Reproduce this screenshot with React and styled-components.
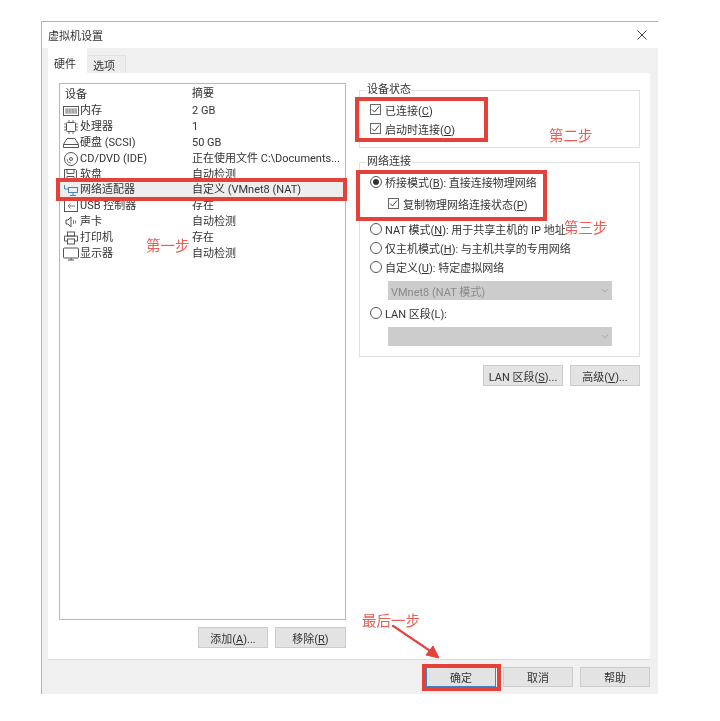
import React from 'react';
import styled, { createGlobalStyle } from 'styled-components';

const FONT = 'Roboto, "Noto Sans CJK SC", sans-serif';
const RED = '#e5413b';

const GlobalStyle = createGlobalStyle`
  html, body {
    margin: 0;
    background: #fff;
  }
  #root {
    height: 721px;
  }
`;

const Page = styled.div`
  position: relative;
  width: 720px;
  height: 721px;
  padding: 21px 0 0 41px;
  box-sizing: border-box;
  overflow: hidden;
  font-family: ${FONT};
  font-size: 11px;
  color: #333;
  filter: blur(0.35px);
`;

const Window = styled.div`
  width: 617px;
  height: 673px;
  box-sizing: border-box;
  border-top: 1px solid #9db8d0;
  border-left: 1px solid #9db8d0;
  display: flex;
  flex-direction: column;
  background: #f0f0f0;
`;

const TitleBar = styled.div`
  height: 26px;
  flex: none;
  display: flex;
  align-items: center;
  justify-content: space-between;
  padding: 0 11px 0 6px;
  background: #fff;
`;

const Tabs = styled.div`
  display: flex;
  align-items: flex-end;
  height: 25px;
  flex: none;
  padding-left: 6px;
`;

const Tab = styled.div`
  display: flex;
  align-items: center;
  justify-content: ${(p) => (p.$active ? 'flex-start' : 'center')};
  box-sizing: border-box;
  background: ${(p) => (p.$active ? '#fff' : '#ededed')};
  width: 39px;
  height: ${(p) => (p.$active ? '25px' : '18px')};
  padding: ${(p) => (p.$active ? '4px 0 0 6px' : '0 4px 0 0')};
  border-right: ${(p) => (p.$active ? 'none' : '1px solid #e2e2e2')};
  border-top: ${(p) => (p.$active ? 'none' : '1px solid #e2e2e2')};
`;

const Panel = styled.div`
  margin-left: 6px;
  width: 602px;
  height: 587px;
  flex: none;
  box-sizing: border-box;
  background: #fff;
  border-bottom: 1px solid #dcdcdc;
  padding: 10px 10px 0 11px;
  display: grid;
  grid-template-columns: 287px 281px;
  column-gap: 13px;
`;

const LeftColumn = styled.div`
  display: flex;
  flex-direction: column;
  gap: 7px;
`;

const DeviceList = styled.div`
  height: 537px;
  box-sizing: border-box;
  border: 1px solid #b8b8b8;
  padding: 2px 0 0 3px;
`;

const DeviceRow = styled.div`
  display: grid;
  grid-template-columns: 129px 1fr;
  height: ${(p) => (p.$header ? '17px' : '15.9px')};
  line-height: 15.9px;
  white-space: nowrap;
  background: ${(p) => (p.$selected ? '#eeeeee' : 'transparent')};
  margin-left: ${(p) => (p.$selected ? '-3px' : '0')};
  padding-left: ${(p) => (p.$selected ? '3px' : '0')};
`;

const DeviceName = styled.div`
  display: flex;
  align-items: center;
  gap: 1px;
  padding-left: ${(p) => (p.$header ? '2px' : '0')};
`;

const ButtonRow = styled.div`
  display: flex;
  justify-content: flex-end;
  gap: 7px;
`;

const Button = styled.button`
  width: ${(p) => p.$w || 71}px;
  height: ${(p) => p.$h || 21}px;
  box-sizing: border-box;
  padding: 0;
  border: 1px solid ${(p) => (p.$primary ? '#3f84c5' : '#cccccc')};
  background: #e3e3e3;
  color: #333;
  font-family: ${FONT};
  font-size: 11px;
  white-space: nowrap;
`;

const RightColumn = styled.div`
  display: flex;
  flex-direction: column;
  padding-top: 1px;
`;

const Group = styled.fieldset`
  margin: 0;
  height: ${(p) => p.$h}px;
  margin-bottom: ${(p) => p.$mb}px;
  box-sizing: border-box;
  border: 1px solid #e0e0e0;
  padding: ${(p) => p.$pad};
  display: flex;
  flex-direction: column;
  min-width: 0;
  legend {
    padding: 0 1px;
    margin-left: -4px;
    line-height: 12px;
    font-size: 11px;
  }
`;

const Option = styled.div`
  display: flex;
  align-items: center;
  gap: 3px;
  height: ${(p) => p.$h || 16}px;
  margin-left: ${(p) => p.$indent || 0}px;
  margin-bottom: ${(p) => p.$mb || 0}px;
  white-space: nowrap;
`;

const Check = styled.span`
  width: 11px;
  height: 11px;
  box-sizing: border-box;
  flex: none;
  border: 1px solid #666;
  display: flex;
  align-items: center;
  justify-content: center;
  margin-right: 1px;
`;

const Radio = styled.span`
  width: 12px;
  height: 12px;
  flex: none;
  box-sizing: border-box;
  border: 1px solid #555;
  border-radius: 50%;
  display: flex;
  align-items: center;
  justify-content: center;
  &::after {
    content: '';
    width: 6px;
    height: 6px;
    border-radius: 50%;
    background: ${(p) => (p.$on ? '#333' : 'transparent')};
  }
`;

const Key = styled.span`
  text-decoration: underline;
  text-underline-offset: 1px;
`;

const Select = styled.div`
  margin: ${(p) => p.$m};
  width: 224px;
  height: 19px;
  flex: none;
  display: flex;
  align-items: center;
  justify-content: space-between;
  box-sizing: border-box;
  padding: 0 3px;
  background: #cccccc;
  color: #8a8a8a;
`;

const Actions = styled.div`
  display: flex;
  justify-content: flex-end;
  gap: 7px;
`;

const Footer = styled.div`
  flex: 1;
  display: flex;
  justify-content: flex-end;
  gap: 7px;
  padding: 7px 8px 0 0;
`;

// red marks drawn over the screenshot
const Mark = styled.div`
  position: absolute;
  left: ${(p) => p.$x}px;
  top: ${(p) => p.$y}px;
  width: ${(p) => p.$w}px;
  height: ${(p) => p.$h}px;
  box-sizing: border-box;
  border: 4px solid ${RED};
`;

const Note = styled.div`
  position: absolute;
  left: ${(p) => p.$x}px;
  top: ${(p) => p.$y}px;
  color: #ea5f54;
  font-family: "Noto Sans CJK SC", sans-serif;
  font-size: 14.5px;
  line-height: 18px;
  white-space: nowrap;
`;

const Arrow = styled.svg`
  position: absolute;
  left: 385px;
  top: 620px;
`;

const Icon = ({ children }) => (
  <svg width="16" height="14" viewBox="0 0 16 14" fill="none" stroke="#555" strokeWidth="1" style={{ flex: 'none' }}>
    {children}
  </svg>
);

const icons = {
  memory: (
    <>
      <rect x="0.5" y="2.5" width="15" height="9" />
      <path d="M2 5h12M2 7h12M2 9h12M4 5v4M7 5v4M10 5v4M13 5v4" stroke="#888" />
    </>
  ),
  cpu: (
    <>
      <rect x="3.5" y="2.5" width="9" height="9" rx="1" />
      <path d="M1 4h2M1 7h2M1 10h2M13 4h2M13 7h2M13 10h2M6 0v2M10 0v2M6 12v2M10 12v2" stroke="#777" />
    </>
  ),
  disk: (
    <>
      <path d="M4 2.5h8l3.5 6v3h-15v-3z" />
      <path d="M0.5 8.5h15" />
    </>
  ),
  cd: (
    <>
      <circle cx="8" cy="7" r="6.5" />
      <circle cx="8" cy="7" r="1.5" />
      <path d="M4 7a4 4 0 0 0 4 4" stroke="#888" />
    </>
  ),
  floppy: (
    <>
      <path d="M1.5 1.5h11l1 1v10h-12z" />
      <path d="M4 1.5v4h7v-4M4 12.5v-4h7v4" />
    </>
  ),
  network: (
    <>
      <rect x="5.5" y="4.5" width="9" height="5" stroke="#4a82b0" />
      <path d="M1.5 2v4h4M10 9.5v3M7 12.5h6" stroke="#4a82b0" />
    </>
  ),
  usb: (
    <>
      <rect x="1.5" y="1.5" width="13" height="11" />
      <path d="M12 7H5M7.5 4.5L5 7l2.5 2.5" stroke="#777" />
    </>
  ),
  sound: (
    <>
      <path d="M3 5v4h2l3 3V2L5 5z" />
      <path d="M10.5 5v4M12.5 5.5v3" stroke="#777" />
    </>
  ),
  printer: (
    <>
      <rect x="4.5" y="1" width="7" height="4" />
      <path d="M4.5 10H1.5V5h13v5h-3" />
      <rect x="4.5" y="8" width="7" height="5" />
    </>
  ),
  monitor: (
    <>
      <rect x="0.5" y="1" width="15" height="10" rx="1" />
      <path d="M5 13h6M8 11v2" />
    </>
  ),
};

const devices = [
  ['memory', '内存', '2 GB'],
  ['cpu', '处理器', '1'],
  ['disk', '硬盘 (SCSI)', '50 GB'],
  ['cd', 'CD/DVD (IDE)', '正在使用文件 C:\\Documents...'],
  ['floppy', '软盘', '自动检测'],
  ['network', '网络适配器', '自定义 (VMnet8 (NAT)'],
  ['usb', 'USB 控制器', '存在'],
  ['sound', '声卡', '自动检测'],
  ['printer', '打印机', '存在'],
  ['monitor', '显示器', '自动检测'],
];

const Tick = () => (
  <svg width="9" height="9" viewBox="0 0 9 9" fill="none" stroke="#444" strokeWidth="1">
    <path d="M1 4.5l2.5 2.5L8 1.5" />
  </svg>
);

const Chevron = () => (
  <svg width="8" height="5" viewBox="0 0 8 5" fill="none" stroke="#aaa" strokeWidth="1">
    <path d="M1 1l3 3 3-3" />
  </svg>
);

export default function App() {
  return (
    <Page>
      <GlobalStyle />
      <Window>
        <TitleBar>
          虚拟机设置
          <svg width="10" height="10" viewBox="0 0 10 10" stroke="#444" strokeWidth="1">
            <path d="M0.5 0.5l9 9M9.5 0.5l-9 9" />
          </svg>
        </TitleBar>
        <Tabs>
          <Tab $active>硬件</Tab>
          <Tab>选项</Tab>
        </Tabs>
        <Panel>
          <LeftColumn>
            <DeviceList>
              <DeviceRow $header>
                <DeviceName $header>设备</DeviceName>
                <div>摘要</div>
              </DeviceRow>
              {devices.map(([icon, name, summary]) => (
                <DeviceRow key={name} $selected={icon === 'network'}>
                  <DeviceName>
                    <Icon>{icons[icon]}</Icon>
                    {name}
                  </DeviceName>
                  <div>{summary}</div>
                </DeviceRow>
              ))}
            </DeviceList>
            <ButtonRow>
              <Button $w={70}>添加(<Key>A</Key>)...</Button>
              <Button>移除(<Key>R</Key>)</Button>
            </ButtonRow>
          </LeftColumn>
          <RightColumn>
            <Group $h={64} $mb={8} $pad="4px 0 0 10px">
              <legend>设备状态</legend>
              <Option $h={19}><Check><Tick /></Check><span>已连接(<Key>C</Key>)</span></Option>
              <Option $h={19}><Check><Tick /></Check><span>启动时连接(<Key>O</Key>)</span></Option>
            </Group>
            <Group $h={201} $mb={8} $pad="5px 0 0 10px">
              <legend>网络连接</legend>
              <Option $h={17} $mb={5}><Radio $on /><span>桥接模式(<Key>B</Key>): 直接连接物理网络</span></Option>
              <Option $h={17} $indent={18} $mb={7}><Check><Tick /></Check><span>复制物理网络连接状态(<Key>P</Key>)</span></Option>
              <Option $h={19}><Radio /><span>NAT 模式(<Key>N</Key>): 用于共享主机的 IP 地址</span></Option>
              <Option $h={19}><Radio /><span>仅主机模式(<Key>H</Key>): 与主机共享的专用网络</span></Option>
              <Option $h={19}><Radio /><span>自定义(<Key>U</Key>): 特定虚拟网络</span></Option>
              <Select $m="5px 0 4px 18px">VMnet8 (NAT 模式)<Chevron /></Select>
              <Option $h={18}><Radio /><span>LAN 区段(L):</span></Option>
              <Select $m="5px 0 0 18px"><span /><Chevron /></Select>
            </Group>
            <Actions>
              <Button $w={80}>LAN 区段(<Key>S</Key>)...</Button>
              <Button $w={70}>高级(<Key>V</Key>)...</Button>
            </Actions>
          </RightColumn>
        </Panel>
        <Footer>
          <Button $w={70} $h={20} $primary>确定</Button>
          <Button $w={70} $h={20}>取消</Button>
          <Button $w={70} $h={20}>帮助</Button>
        </Footer>
      </Window>

      <Mark $x={56} $y={178} $w={291} $h={23} />
      <Mark $x={355} $y={97} $w={133} $h={45} />
      <Mark $x={356} $y={170} $w={191} $h={51} />
      <Mark $x={422} $y={664} $w={79} $h={27} />
      <Note $x={146} $y={236}>第一步</Note>
      <Note $x={549} $y={126}>第二步</Note>
      <Note $x={564} $y={218}>第三步</Note>
      <Note $x={362} $y={611}>最后一步</Note>
      <Arrow width="60" height="42" viewBox="0 0 60 42">
        <path d="M7 6L44 31l-3 4 13 3-6-12-3 4L8 5z" fill={RED} stroke={RED} strokeWidth="1" />
      </Arrow>
    </Page>
  );
}
